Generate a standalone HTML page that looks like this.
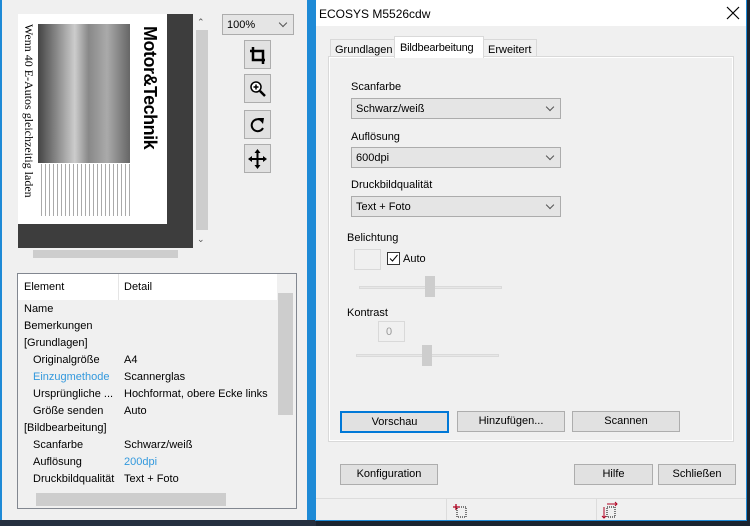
<!DOCTYPE html>
<html><head><meta charset="utf-8"><style>
*{box-sizing:border-box;margin:0;padding:0}
body{width:750px;height:526px;overflow:hidden;position:relative;background:#1e8ad6;font-family:"Liberation Sans",sans-serif;font-size:11px;color:#000}
.a{position:absolute}
.btn{position:absolute;background:#e1e1e1;border:1px solid #adadad;text-align:center;line-height:19px;font-size:11px}
.combo{position:absolute;background:#e5e5e5;border:1px solid #acacac;padding-left:4px;line-height:20px}
.combo:after{content:"";position:absolute;right:7px;top:5px;width:5px;height:5px;border-right:1px solid #555;border-bottom:1px solid #555;transform:rotate(45deg)}
.tb{position:absolute;left:244px;width:27px;height:29px;background:#e1e1e1;border:1px solid #adadad}
.row{position:absolute;left:24px;height:17px;line-height:17px;top:0}
.d{position:absolute;left:124px;line-height:17px}
</style></head><body>
<div class="a" style="left:0;top:0;width:307px;height:520px;background:#f0f0f0;border-left:2px solid #1e8ad6"></div>
<div class="a" style="left:0;top:520px;width:316px;height:6px;background:#263040"></div>
<div class="a" style="left:18px;top:14px;width:175px;height:234px;background:#3d3d3d"></div>
<div class="a" style="left:18px;top:14px;width:149px;height:210px;background:#fff">
 <div class="a" style="left:20px;top:10px;width:92px;height:139px;background:linear-gradient(90deg,#444 0%,#888 20%,#ccc 40%,#888 55%,#aaa 75%,#666 100%)"></div>
 <div class="a" style="left:20px;top:150px;width:92px;height:52px;background:repeating-linear-gradient(90deg,#fff 0 3px,#aaa 3px 4px)"></div>
 <div class="a" style="top:10px;transform-origin:0 0;transform:rotate(90deg);font-family:'Liberation Serif',serif;font-size:12px;white-space:nowrap;left:18px">Wenn 40 E-Autos gleichzeitig laden</div>
 <div class="a" style="left:142px;top:12px;transform-origin:0 0;transform:rotate(90deg);font-weight:bold;font-size:18px;white-space:nowrap;letter-spacing:-0.5px">Motor&amp;Technik</div>
</div>
<div class="a" style="left:195px;top:14px;width:14px;height:234px;background:#f0f0f0"></div>
<div class="a" style="left:196px;top:30px;width:12px;height:200px;background:#cdcdcd"></div>
<div class="a" style="left:197px;top:17px;font-size:9px;color:#555">&#8963;</div>
<div class="a" style="left:197px;top:234px;font-size:9px;color:#555">&#8964;</div>
<div class="a" style="left:33px;top:250px;width:145px;height:8px;background:#cdcdcd"></div>
<div class="combo" style="left:222px;top:14px;width:72px;height:21px">100%</div>
<div class="tb" style="top:40px"><svg width="25" height="27"><path d="M8 6v13h12M5 10h13v13" stroke="#000" stroke-width="2.5" fill="none"/></svg></div>
<div class="tb" style="top:74px"><svg width="25" height="27"><circle cx="11" cy="12" r="5" stroke="#000" stroke-width="1.5" fill="#fff"/><path d="M8.5 12h5M11 9.5v5" stroke="#000" stroke-width="1.5"/><path d="M15 16l5 5" stroke="#000" stroke-width="2.5"/></svg></div>
<div class="tb" style="top:110px"><svg width="25" height="27"><path d="M17 10a6 6 0 1 0 1 7" stroke="#000" stroke-width="2" fill="none"/><path d="M13 7l6 0-1 6z" fill="#000"/></svg></div>
<div class="tb" style="top:144px"><svg width="25" height="27"><path d="M12.5 6v16M5 14h15" stroke="#000" stroke-width="2"/><path d="M12.5 4l3 4h-6zM12.5 24l3-4h-6zM3 14l4-3v6zM22 14l-4-3v6z" fill="#000"/></svg></div>
<div class="a" style="left:17px;top:273px;width:280px;height:236px;border:1px solid #828790;background:#f0f0f0"></div>
<div class="a" style="left:18px;top:274px;width:259px;height:26px;background:#fff"></div>
<div class="a" style="left:118px;top:274px;width:1px;height:26px;background:#e5e5e5"></div>
<div class="a" style="left:24px;top:281px">Element</div>
<div class="a" style="left:124px;top:281px">Detail</div>
<div class="a" style="left:277px;top:274px;width:19px;height:218px;background:#f0f0f0"></div>
<div class="a" style="left:278px;top:293px;width:15px;height:122px;background:#cdcdcd"></div>
<div class="a" style="left:36px;top:493px;width:190px;height:13px;background:#cdcdcd"></div>
<div class="a" style="left:0;top:301px;width:300px;height:200px">
<div class="row" style="top:0">Name</div>
<div class="row" style="top:17px">Bemerkungen</div>
<div class="row" style="top:34px">[Grundlagen]</div>
<div class="row" style="top:51px;left:33px">Originalgröße</div><div class="d" style="top:51px">A4</div>
<div class="row" style="top:68px;left:33px;color:#3399dd">Einzugmethode</div><div class="d" style="top:68px">Scannerglas</div>
<div class="row" style="top:85px;left:33px">Ursprüngliche ...</div><div class="d" style="top:85px">Hochformat, obere Ecke links</div>
<div class="row" style="top:102px;left:33px">Größe senden</div><div class="d" style="top:102px">Auto</div>
<div class="row" style="top:119px">[Bildbearbeitung]</div>
<div class="row" style="top:136px;left:33px">Scanfarbe</div><div class="d" style="top:136px">Schwarz/weiß</div>
<div class="row" style="top:153px;left:33px">Auflösung</div><div class="d" style="top:153px;color:#3399dd">200dpi</div>
<div class="row" style="top:170px;left:33px">Druckbildqualität</div><div class="d" style="top:170px">Text + Foto</div>
</div>
<div class="a" style="left:746px;top:0;width:4px;height:526px;background:#1b2430"></div>
<div class="a" style="left:316px;top:520px;width:434px;height:6px;background:#1b2430"></div>
<div class="a" style="left:315px;top:0;width:432px;height:521px;background:#f0f0f0;border:1px solid #1e8ad6"></div>
<div class="a" style="left:316px;top:0;width:430px;height:26px;background:#fff"></div>
<div class="a" style="left:319px;top:7px;font-size:12px">ECOSYS M5526cdw</div>
<svg class="a" style="left:726px;top:6px" width="14" height="14"><path d="M1 1l12 12M13 1L1 13" stroke="#000" stroke-width="1.2"/></svg>
<div class="a" style="left:328px;top:56px;width:406px;height:386px;background:#f0f0f0;border:1px solid #d9d9d9;box-shadow:inset 0 0 0 1px #fff"></div>
<div class="a" style="left:330px;top:39px;width:65px;height:18px;border:1px solid #d9d9d9;border-bottom:none;padding:4px 0 0 4px">Grundlagen</div>
<div class="a" style="left:483px;top:39px;width:54px;height:18px;border:1px solid #d9d9d9;border-bottom:none;padding:4px 0 0 4px">Erweitert</div>
<div class="a" style="left:394px;top:36px;width:90px;height:22px;background:#fff;border:1px solid #d9d9d9;border-bottom:none;padding:5px 0 0 5px;letter-spacing:-0.2px">Bildbearbeitung</div>
<div class="a" style="left:351px;top:81px">Scanfarbe</div>
<div class="combo" style="left:351px;top:98px;width:210px;height:21px">Schwarz/weiß</div>
<div class="a" style="left:351px;top:131px">Auflösung</div>
<div class="combo" style="left:351px;top:147px;width:210px;height:21px">600dpi</div>
<div class="a" style="left:351px;top:179px">Druckbildqualität</div>
<div class="combo" style="left:351px;top:196px;width:210px;height:21px">Text + Foto</div>
<div class="a" style="left:347px;top:232px">Belichtung</div>
<div class="a" style="left:354px;top:249px;width:27px;height:21px;border:1px solid #d9d9d9"></div>
<div class="a" style="left:387px;top:252px;width:13px;height:13px;border:1px solid #333;background:#fff"><svg width="11" height="11" style="position:absolute;left:0;top:0"><path d="M2 5.5l2.5 2.5 5-6" stroke="#000" fill="none"/></svg></div>
<div class="a" style="left:403px;top:253px">Auto</div>
<div class="a" style="left:359px;top:286px;width:143px;height:3px;background:#e7e7e7;border:1px solid #dadada"></div>
<div class="a" style="left:425px;top:276px;width:10px;height:21px;background:#cdcdcd"></div>
<div class="a" style="left:347px;top:307px">Kontrast</div>
<div class="a" style="left:378px;top:321px;width:27px;height:21px;border:1px solid #d9d9d9;color:#999;padding:4px 0 0 7px">0</div>
<div class="a" style="left:356px;top:354px;width:143px;height:3px;background:#e7e7e7;border:1px solid #dadada"></div>
<div class="a" style="left:422px;top:345px;width:10px;height:21px;background:#cdcdcd"></div>
<div class="btn" style="left:340px;top:411px;width:109px;height:22px;border:2px solid #0078d7;line-height:19px">Vorschau</div>
<div class="btn" style="left:457px;top:411px;width:108px;height:21px">Hinzufügen...</div>
<div class="btn" style="left:572px;top:411px;width:108px;height:21px">Scannen</div>
<div class="btn" style="left:340px;top:464px;width:98px;height:21px">Konfiguration</div>
<div class="btn" style="left:574px;top:464px;width:79px;height:21px">Hilfe</div>
<div class="btn" style="left:658px;top:464px;width:78px;height:21px">Schließen</div>
<div class="a" style="left:316px;top:498px;width:430px;height:1px;background:#dcdcdc"></div>
<div class="a" style="left:446px;top:499px;width:1px;height:21px;background:#dcdcdc"></div>
<div class="a" style="left:596px;top:499px;width:1px;height:21px;background:#dcdcdc"></div>
<svg class="a" style="left:452px;top:503px" width="16" height="16"><path d="M5 4h9v10H5z" stroke="#000" stroke-dasharray="1 1" fill="none"/><path d="M1 4h7M4 1v6" stroke="#b00020" stroke-width="1.3"/></svg>
<svg class="a" style="left:600px;top:501px" width="20" height="18"><path d="M7 6h8v10H7z" stroke="#000" stroke-dasharray="1 1" fill="none"/><path d="M7 3h10M15 1l2 2-2 2M4 6v11M2 15l2 2 2-2" stroke="#b00020" fill="none"/></svg>
</body></html>
